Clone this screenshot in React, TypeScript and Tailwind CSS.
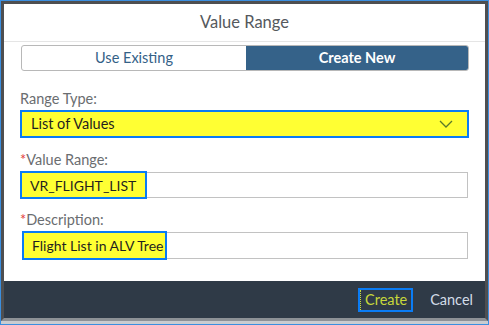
import React from 'react'

const font = { fontFamily: 'Lato, "Noto Sans", Arial, sans-serif' }

const Label: React.FC<{ text: string; required?: boolean }> = ({ text, required }) => (
  <div className="h-[20px] text-[14.5px] leading-[20px] text-[#6a6d70]">
    {required && <span className="text-[#e34040]">*</span>}
    {text}
  </div>
)

const App: React.FC = () => {
  return (
    <div className="w-[489px] h-[325px] border border-[#3b8fe0] bg-[#c9ccd0] overflow-hidden" style={font}>
      <div className="flex h-[320px] flex-col border-x-[3px] border-t-[3px] border-b-[3px] border-x-[#4e4f51] border-t-[#4e4f51] border-b-[#8d9196] bg-white">
        <div className="flex h-[38px] items-center justify-center border-b border-[#e5e5e5] text-[16.5px] text-[#55595d]">
          Value Range
        </div>

        <div className="flex flex-1 flex-col px-[16px]">
          <div className="mt-[3px] ml-[1px] flex h-[26px] overflow-hidden rounded-[3px] border border-[#b8b8b8] text-[14.5px]">
            <div className="flex w-[224px] items-center justify-center text-[#346187]">Use Existing</div>
            <div className="flex flex-1 items-center justify-center bg-[#356289] font-bold text-white">Create New</div>
          </div>

          <div className="mt-[18px]">
            <Label text="Range Type:" />
          </div>
          <div className="mt-[1px] flex h-[28px] items-center justify-between border-2 border-[#0a7cf5] bg-[#ffff33] pl-[9px] pr-[14px] text-[14.5px] text-[#1f1f1f]">
            <span className="whitespace-nowrap">List of Values</span>
            <svg width="14" height="8" viewBox="0 0 14 8" fill="none" stroke="#5a7a2a" strokeWidth="1.3">
              <path d="M1 1l6 6 6-6" />
            </svg>
          </div>

          <div className="mt-[12px]">
            <Label text="Value Range:" required />
          </div>
          <div className="mt-[1px] flex h-[28px] items-stretch">
            <div className="flex w-[127px] items-center whitespace-nowrap border-2 border-[#0a7cf5] bg-[#ffff33] pl-[8px] text-[14px] text-[#1f1f1f]">
              VR_FLIGHT_LIST
            </div>
            <div className="my-[1px] mr-[1px] flex-1 border border-l-0 border-[#c2c2c2]" />
          </div>

          <div className="mt-[11px]">
            <Label text="Description:" required />
          </div>
          <div className="mt-[1px] flex h-[29px] items-stretch pl-[2px]">
            <div className="flex w-[145px] items-center whitespace-nowrap border-2 border-[#0a7cf5] bg-[#ffff33] pl-[8px] text-[14px] text-[#1f1f1f]">
              Flight List in ALV Tree
            </div>
            <div className="my-[1px] mr-[1px] flex-1 border border-l-0 border-[#c2c2c2]" />
          </div>
        </div>

        <div className="flex h-[37px] items-center justify-end gap-[17px] bg-[#2f3a47] pr-[12px] text-[14.5px]">
          <div className="flex h-[24px] w-[55px] items-center justify-center border-2 border-[#0a7cf5]">
            <div className="flex h-full w-full items-center justify-center border-l border-dotted border-[#c8d83b] text-[#c8d83b]">
              Create
            </div>
          </div>
          <div className="text-[#d3dde8]">Cancel</div>
        </div>
      </div>
    </div>
  )
}

export default App
